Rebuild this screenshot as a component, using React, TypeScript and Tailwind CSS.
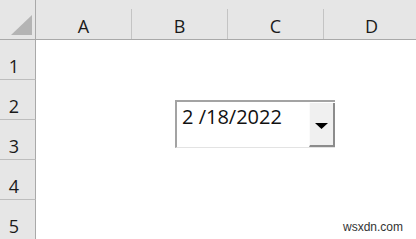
import React from "react";

export default function App() {
  const cols = ["A", "B", "C", "D"];
  const rows = [1, 2, 3, 4, 5];
  return (
    <div
      className="relative w-[416px] h-[239px] overflow-hidden bg-white"
      style={{ fontFamily: '"Open Sans", "Noto Sans", sans-serif' }}
    >
      <div className="grid grid-cols-[36px_96px_96px_96px_96px] grid-rows-[40px_40px_40px_40px_40px_40px]">
        <div className="bg-[#e6e6e6] border-r border-b border-[#a9a9a9] flex items-end justify-end pr-[3px] pb-[4px]">
          <svg width="21" height="20" viewBox="0 0 21 20">
            <polygon points="21,0 21,20 0,20" fill="#b4b4b4" />
          </svg>
        </div>
        {cols.map((c) => (
          <div key={c} className="bg-[#e6e6e6] border-b border-[#a9a9a9] flex">
            <div className="flex-1 flex items-end justify-center pb-[4px] text-[18px] leading-none text-[#1a1a1a]">
              {c}
            </div>
            <div className="w-px mt-[9px] bg-[#c4c4c4]" />
          </div>
        ))}
        {rows.map((r) => (
          <React.Fragment key={r}>
            <div className="bg-[#e6e6e6] border-r border-r-[#a9a9a9] border-b border-b-[#bdbdbd] flex items-end justify-center pr-[7px] pb-[4px] text-[18px] leading-none text-[#1a1a1a]">
              {r}
            </div>
            {cols.map((c) => (
              <div key={c} className="bg-white" />
            ))}
          </React.Fragment>
        ))}
      </div>

      <div className="absolute left-[175px] top-[100px] w-[160px] h-[48px] flex border-t-2 border-l-2 border-t-[#a3a3a3] border-l-[#a3a3a3] border-b border-b-[#e3e3e3] bg-white">
        <div className="flex-1 pl-[5px] pt-[5px] text-[20px] leading-none text-[#111]">
          2 /18/2022
        </div>
        <div className="w-[26px] mt-[1px] bg-[#f0f0f0] border-l border-l-[#fbfbfb] border-r-2 border-r-[#8c8c8c] border-b-2 border-b-[#8c8c8c] flex items-center justify-center pt-[3px]">
          <svg width="13" height="6" viewBox="0 0 13 6">
            <polygon points="0,0 13,0 6.5,6" fill="#000" />
          </svg>
        </div>
      </div>

      <div
        className="absolute left-[343px] top-[221px] text-[12px] leading-none text-[#333]"
        style={{ fontFamily: '"Liberation Sans", Arial, sans-serif' }}
      >
        wsxdn.com
      </div>
    </div>
  );
}
